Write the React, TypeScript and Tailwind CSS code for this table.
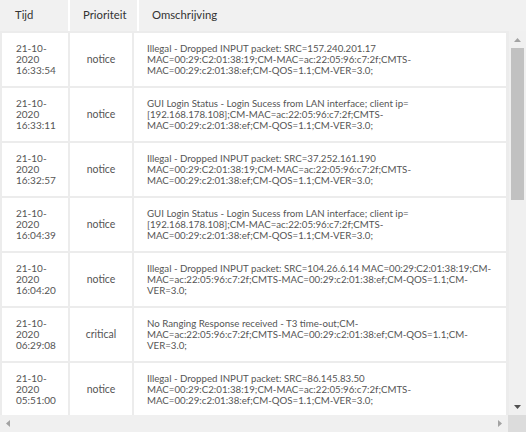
import { FC } from "react";

type LogRow = {
  date: string;
  time: string;
  level: string;
  lines: string[];
};

const dropped = (src: string) => [
  `Illegal - Dropped INPUT packet: SRC=${src}`,
  "MAC=00:29:C2:01:38:19;CM-MAC=ac:22:05:96:c7:2f;CMTS-",
  "MAC=00:29:c2:01:38:ef;CM-QOS=1.1;CM-VER=3.0;",
];

const login = [
  "GUI Login Status - Login Sucess from LAN interface; client ip=",
  "[192.168.178.108];CM-MAC=ac:22:05:96:c7:2f;CMTS-",
  "MAC=00:29:c2:01:38:ef;CM-QOS=1.1;CM-VER=3.0;",
];

const rows: LogRow[] = [
  { date: "21-10-", time: "16:33:54", level: "notice", lines: dropped("157.240.201.17") },
  { date: "21-10-", time: "16:33:11", level: "notice", lines: login },
  { date: "21-10-", time: "16:32:57", level: "notice", lines: dropped("37.252.161.190") },
  { date: "21-10-", time: "16:04:39", level: "notice", lines: login },
  {
    date: "21-10-",
    time: "16:04:20",
    level: "notice",
    lines: [
      "Illegal - Dropped INPUT packet: SRC=104.26.6.14 MAC=00:29:C2:01:38:19;CM-",
      "MAC=ac:22:05:96:c7:2f;CMTS-MAC=00:29:c2:01:38:ef;CM-QOS=1.1;CM-",
      "VER=3.0;",
    ],
  },
  {
    date: "21-10-",
    time: "06:29:08",
    level: "critical",
    lines: [
      "No Ranging Response received - T3 time-out;CM-",
      "MAC=ac:22:05:96:c7:2f;CMTS-MAC=00:29:c2:01:38:ef;CM-QOS=1.1;CM-",
      "VER=3.0;",
    ],
  },
  { date: "21-10-", time: "05:51:00", level: "notice", lines: dropped("86.145.83.50") },
];

const Arrow: FC<{ dir: "up" | "down" | "left" | "right"; color: string }> = ({ dir, color }) => {
  const pts = {
    up: "0,4 7,4 3.5,0",
    down: "0,0 7,0 3.5,4",
    left: "4,0 4,7 0,3.5",
    right: "0,0 0,7 4,3.5",
  }[dir];
  const vertical = dir === "up" || dir === "down";
  return (
    <svg width={vertical ? 7 : 4} height={vertical ? 4 : 7} viewBox={vertical ? "0 0 7 4" : "0 0 4 7"}>
      <polygon points={pts} fill={color} />
    </svg>
  );
};

const App: FC = () => {
  return (
    <div className="w-[526px] h-[432px] bg-[#ececec] flex flex-col font-['Lato','Open_Sans',sans-serif] overflow-hidden">
      {/* kop */}
      <div className="flex h-[31px] shrink-0 bg-[#f1f1f1] text-[11.3px] text-[#333]">
        <div className="w-[70px] border-r-2 border-white pl-[15px] flex items-center">Tijd</div>
        <div className="w-[69px] border-r-2 border-white pl-[13px] flex items-center">Prioriteit</div>
        <div className="flex-1 pl-[13px] flex items-center">Omschrijving</div>
      </div>

      <div className="flex flex-1 min-h-0">
        {/* logregels */}
        <div className="w-[508px] overflow-hidden pl-[2px] pt-[2px] flex flex-col gap-[2px] text-[9.7px] leading-[11.3px] text-[#555]">
          {rows.map((r, i) => (
            <div key={i} className="flex gap-[2px] h-[53px] shrink-0">
              <div className="w-[66px] bg-white pl-[14px] flex flex-col justify-center text-[10px]">
                <span>{r.date}</span>
                <span>2020</span>
                <span>{r.time}</span>
              </div>
              <div className="w-[62px] bg-white flex items-center justify-center text-[10.5px]">{r.level}</div>
              <div className="w-[372px] bg-white pl-[13px] flex flex-col justify-center whitespace-nowrap">
                {r.lines.map((l, j) => (
                  <span key={j}>{l}</span>
                ))}
              </div>
            </div>
          ))}
        </div>

        {/* verticale scrollbalk */}
        <div className="w-[17px] ml-[1px] bg-[#f0f0f0] flex flex-col items-center">
          <div className="h-[17px] flex items-center justify-center">
            <Arrow dir="up" color="#a3a3a3" />
          </div>
          <div className="w-[13px] h-[152px] bg-[#c1c1c1]"></div>
          <div className="flex-1"></div>
          <div className="h-[17px] flex items-center justify-center">
            <Arrow dir="down" color="#505050" />
          </div>
        </div>
      </div>

      {/* horizontale scrollbalk */}
      <div className="flex h-[17px] shrink-0">
        <div className="flex-1 bg-[#f0f0f0] flex items-center justify-between px-[6px]">
          <Arrow dir="left" color="#a3a3a3" />
          <Arrow dir="right" color="#a3a3a3" />
        </div>
        <div className="w-[18px] bg-[#dcdcdc]"></div>
      </div>
    </div>
  );
};

export default App;
